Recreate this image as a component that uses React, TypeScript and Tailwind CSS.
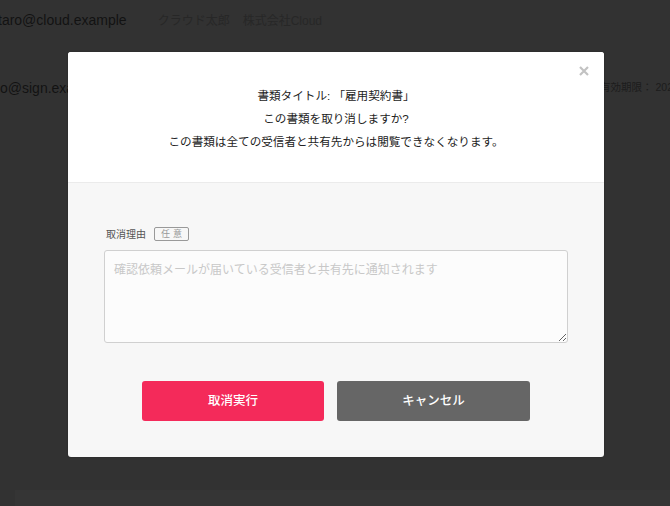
import React from "react";

const font = { fontFamily: '"Liberation Sans", "Noto Sans CJK JP", sans-serif' };

export default function App() {
  return (
    <div className="relative w-[670px] h-[506px] overflow-hidden bg-[#323232]" style={font}>
      {/* background page (dimmed) */}
      <div className="flex flex-col h-full">
        <div className="flex items-center h-[40px] pt-[1px]">
          <span className="ml-[-2px] text-[14px] text-[#121212] whitespace-nowrap">taro@cloud.example</span>
          <span className="ml-[31px] text-[12px] text-[#272727] whitespace-nowrap">クラウド太郎</span>
          <span className="ml-[13px] text-[12px] text-[#272727] whitespace-nowrap">株式会社Cloud</span>
        </div>
        <div className="flex items-center justify-between h-[20px] mt-[38px]">
          <span className="ml-[0px] text-[14px] text-[#121212] whitespace-nowrap">o@sign.example.com</span>
          <span className="mr-[-38px] text-[10.5px] text-[#1c1c1c] whitespace-nowrap">有効期限： 2023/01/01</span>
        </div>
        <div className="flex-1" />
        <div className="ml-[15px] h-[16px] bg-[#353535]" />
      </div>

      {/* modal */}
      <div className="absolute left-[68px] top-[52px] w-[536px] h-[405px] rounded-[3px] overflow-hidden flex flex-col bg-[#f7f7f7] shadow-[0_0_2px_rgba(0,0,0,0.3)]">
        <div className="relative bg-white h-[131px] border-b border-[#ebebeb] flex flex-col items-center pt-[32px] text-[11.6px] text-[#222] leading-[23px]">
          <svg className="absolute left-[511px] top-[14px]" width="10" height="10" viewBox="0 0 10 10">
            <path d="M1 1 L9 9 M9 1 L1 9" stroke="#c2c2c2" strokeWidth="2.2" strokeLinecap="butt" />
          </svg>
          <p>書類タイトル: 「雇用契約書」</p>
          <p>この書類を取り消しますか?</p>
          <p>この書類は全ての受信者と共有先からは閲覧できなくなります。</p>
        </div>
        <div className="flex flex-col px-[36px] pt-[43px]">
          <div className="flex items-center ml-[2px] h-[16px]">
            <span className="text-[10px] text-[#555]">取消理由</span>
            <span className="ml-[8px] w-[35px] h-[14px] border border-[#999] rounded-[2px] text-[9px] text-[#999] flex items-center justify-center tracking-[3px] pl-[3px] leading-none">任意</span>
          </div>
          <textarea
            className="mt-[8px] w-[464px] h-[93px] bg-[#fcfcfc] border border-[#d0d0d0] rounded-[3px] px-[9px] pt-[10px] pb-[8px] text-[12px] placeholder:text-[#c8c8c8] outline-none resize"
            placeholder="確認依頼メールが届いている受信者と共有先に通知されます"
          />
          <div className="flex mt-[38px] ml-[38px] gap-[13px]">
            <button className="w-[182px] h-[40px] rounded-[3px] bg-[#f42a5a] text-white text-[12.5px] font-medium">取消実行</button>
            <button className="w-[193px] h-[40px] rounded-[3px] bg-[#666] text-white text-[12.5px] font-medium">キャンセル</button>
          </div>
        </div>
      </div>
    </div>
  );
}
